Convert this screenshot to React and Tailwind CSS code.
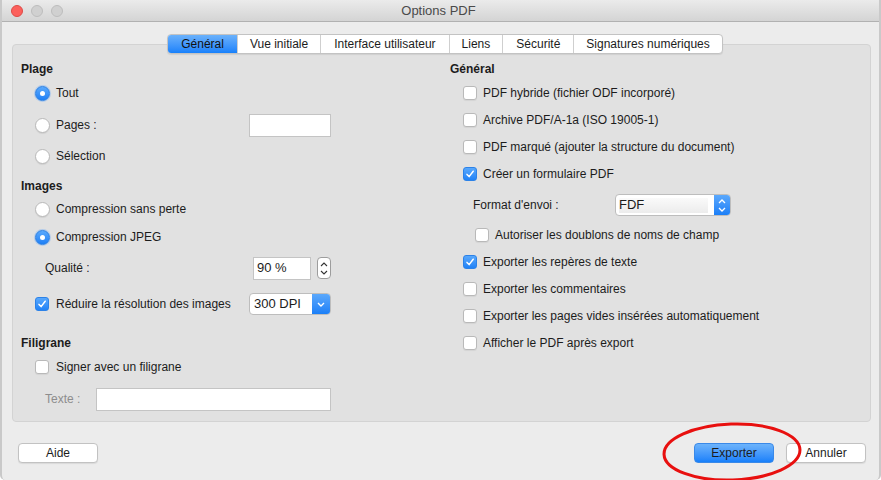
import React from 'react'

const font = { fontFamily: '"Liberation Sans", Arial, Helvetica, sans-serif' }

function Radio({ checked }) {
  if (checked) {
    return (
      <div className="w-[15px] h-[15px] rounded-full bg-gradient-to-b from-[#5aa9fc] to-[#1b7ff6] border border-[#2a80e6] flex items-center justify-center shrink-0 shadow-[0_0_0_1px_rgba(90,160,250,0.35)]">
        <div className="w-[5px] h-[5px] rounded-full bg-white"></div>
      </div>
    )
  }
  return (
    <div className="w-[15px] h-[15px] rounded-full bg-white border border-[#b9b9b9] shrink-0 shadow-[0_1px_1px_rgba(0,0,0,0.08)]"></div>
  )
}

function Check({ checked }) {
  if (checked) {
    return (
      <div className="w-[14px] h-[14px] rounded-[3px] bg-gradient-to-b from-[#58a8fc] to-[#1f82f7] border border-[#2c82e8] flex items-center justify-center shrink-0">
        <svg width="10" height="10" viewBox="0 0 10 10">
          <path d="M2 5.4 L4.1 7.6 L8.2 2.2" fill="none" stroke="white" strokeWidth="1.5" strokeLinecap="round" strokeLinejoin="round" />
        </svg>
      </div>
    )
  }
  return <div className="w-[14px] h-[14px] rounded-[3px] bg-white border border-[#b9b9b9] shrink-0 shadow-[0_1px_1px_rgba(0,0,0,0.06)]"></div>
}

function RadioRow({ checked, label, className = '', children }) {
  return (
    <div className={`h-[24px] flex items-center ${className}`}>
      <div className="ml-[14px] flex items-center gap-[6px]">
        <Radio checked={checked} />
        <span>{label}</span>
      </div>
      {children}
    </div>
  )
}

function CheckRow({ checked, label, indent = 'ml-[13px]', className = '' }) {
  return (
    <div className={`h-[24px] flex items-center ${className}`}>
      <div className={`${indent} flex items-center gap-[6px]`}>
        <Check checked={checked} />
        <span className="whitespace-nowrap">{label}</span>
      </div>
    </div>
  )
}

function Input({ className = '', value = '' }) {
  return (
    <div className={`h-[23px] bg-white border border-[#c4c4c4] flex items-center px-[3px] text-[13px] ${className}`}>
      {value}
    </div>
  )
}

export default function App() {
  const tabs = [
    ['Général', 'px-[13px]'],
    ['Vue initiale', 'px-[12px]'],
    ['Interface utilisateur', 'px-[13px]'],
    ['Liens', 'px-[12px]'],
    ['Sécurité', 'px-[13px]'],
    ['Signatures numériques', 'px-[12px]'],
  ]

  return (
    <div className="w-[881px] h-[480px] bg-[#ececec] text-[12px] text-[#1c1c1c] relative overflow-hidden border-l-2 border-r-2 border-[#c9c9c9] rounded-b-[5px]" style={font}>
      {/* title bar */}
      <div className="h-[22px] bg-gradient-to-b from-[#ebebeb] to-[#d4d4d4] border-b border-[#b1b1b1] flex items-center relative">
        <div className="flex items-center gap-[8px] ml-[9px]">
          <div className="w-[12px] h-[12px] rounded-full bg-[#fc605c] border border-[#de4a46]"></div>
          <div className="w-[12px] h-[12px] rounded-full bg-[#d0d0d0] border border-[#bdbdbd]"></div>
          <div className="w-[12px] h-[12px] rounded-full bg-[#d0d0d0] border border-[#bdbdbd]"></div>
        </div>
        <div className="flex-1 text-center text-[13px] text-[#4a4a4a] mr-[65px]">Options PDF</div>
      </div>

      {/* tabs */}
      <div className="mt-[12px] flex justify-center relative z-10 pl-[9px]">
        <div className="flex h-[20px] rounded-[4px] border border-[#c3c3c3] bg-white overflow-hidden shadow-[0_1px_1px_rgba(0,0,0,0.08)]">
          {tabs.map(([t, pad], i) => (
            <div
              key={t}
              className={`${pad} flex items-center ${i > 0 ? 'border-l border-[#cfcfcf]' : ''} ${
                i === 0 ? 'bg-gradient-to-b from-[#6ab1fb] to-[#1681fb] text-[#111]' : ''
              }`}
            >
              {t}
            </div>
          ))}
        </div>
      </div>

      {/* panel */}
      <div className="-mt-[10px] ml-[10px] w-[859px] h-[378px] bg-[#e1e1e1] border border-[#d3d3d3] rounded-[4px] grid grid-cols-[428px_1fr] pt-[14px]">
        {/* left column */}
        <div className="pl-[8px] w-[318px]">
          <div className="h-[20px] flex items-center font-bold">Plage</div>
          <RadioRow checked label="Tout" className="mt-[2px]" />
          <RadioRow label="Pages :" className="mt-[8px] justify-between">
            <Input className="w-[82px]" />
          </RadioRow>
          <RadioRow label="Sélection" className="mt-[7px]" />

          <div className="h-[20px] mt-[8px] flex items-center font-bold">Images</div>
          <RadioRow label="Compression sans perte" className="mt-[1px]" />
          <RadioRow checked label="Compression JPEG" className="mt-[4px]" />
          <div className="h-[24px] mt-[7px] flex items-center">
            <span className="ml-[24px] flex-1">Qualité :</span>
            <Input className="w-[58px]" value="90 %" />
            <div className="ml-[6px] w-[14px] h-[22px] bg-white border border-[#9d9d9d] rounded-[4px] flex flex-col items-center justify-center gap-[3px]">
              <svg width="8" height="5" viewBox="0 0 8 5"><path d="M1 4 L4 1 L7 4" fill="none" stroke="#333" strokeWidth="1.1" /></svg>
              <svg width="8" height="5" viewBox="0 0 8 5"><path d="M1 1 L4 4 L7 1" fill="none" stroke="#333" strokeWidth="1.1" /></svg>
            </div>
          </div>
          <div className="h-[24px] mt-[12px] flex items-center">
            <div className="ml-[14px] flex items-center gap-[7px] flex-1">
              <Check checked />
              <span>Réduire la résolution des images</span>
            </div>
            <div className="w-[82px] h-[22px] flex rounded-[4px] overflow-hidden border border-[#bdbdbd] bg-white">
              <div className="flex-1 flex items-center pl-[4px] text-[13px]">300 DPI</div>
              <div className="w-[18px] bg-gradient-to-b from-[#5aa8fc] to-[#1a7ff7] flex items-center justify-center">
                <svg width="8" height="5" viewBox="0 0 8 5"><path d="M1 1 L4 4 L7 1" fill="none" stroke="white" strokeWidth="1.4" /></svg>
              </div>
            </div>
          </div>

          <div className="h-[20px] mt-[17px] flex items-center font-bold">Filigrane</div>
          <div className="h-[24px] mt-[2px] flex items-center">
            <div className="ml-[14px] flex items-center gap-[7px]">
              <Check />
              <span>Signer avec un filigrane</span>
            </div>
          </div>
          <div className="h-[24px] mt-[8px] flex items-center">
            <span className="ml-[24px] flex-1 text-[#8d8d8d]">Texte :</span>
            <Input className="w-[235px]" />
          </div>
        </div>

        {/* right column */}
        <div className="pl-[9px]">
          <div className="h-[20px] flex items-center font-bold">Général</div>
          <CheckRow label="PDF hybride (fichier ODF incorporé)" className="mt-[2px]" />
          <CheckRow label="Archive PDF/A-1a (ISO 19005-1)" className="mt-[3px]" />
          <CheckRow label="PDF marqué (ajouter la structure du document)" className="mt-[3px]" />
          <CheckRow checked label="Créer un formulaire PDF" className="mt-[3px]" />
          <div className="h-[24px] mt-[7px] flex items-center">
            <span className="ml-[23px] w-[142px]">Format d'envoi :</span>
            <div className="w-[116px] h-[22px] flex rounded-[4px] overflow-hidden border border-[#bdbdbd] bg-white">
              <div className="flex-1 flex items-center pl-[3px] pr-[6px] text-[13px]">
                <div className="w-full h-[15px] bg-gradient-to-b from-[#fafafa] to-[#ececec] flex items-center">FDF</div>
              </div>
              <div className="w-[16px] bg-gradient-to-b from-[#5aa8fc] to-[#1a7ff7] flex flex-col items-center justify-center gap-[3px]">
                <svg width="8" height="5" viewBox="0 0 8 5"><path d="M1 4 L4 1 L7 4" fill="none" stroke="white" strokeWidth="1.3" /></svg>
                <svg width="8" height="5" viewBox="0 0 8 5"><path d="M1 1 L4 4 L7 1" fill="none" stroke="white" strokeWidth="1.3" /></svg>
              </div>
            </div>
          </div>
          <CheckRow label="Autoriser les doublons de noms de champ" indent="ml-[25px]" className="mt-[6px]" />
          <CheckRow checked label="Exporter les repères de texte" className="mt-[3px]" />
          <CheckRow label="Exporter les commentaires" className="mt-[3px]" />
          <CheckRow label="Exporter les pages vides insérées automatiquement" className="mt-[3px]" />
          <CheckRow label="Afficher le PDF après export" className="mt-[3px]" />
        </div>
      </div>

      {/* bottom buttons */}
      <div className="mt-[21px] flex items-center pl-[16px] pr-[13px]">
        <div className="w-[80px] h-[20px] bg-white border border-[#c2c2c2] rounded-[4px] flex items-center justify-center shadow-[0_1px_1px_rgba(0,0,0,0.08)]">Aide</div>
        <div className="flex-1"></div>
        <div className="w-[80px] h-[20px] bg-gradient-to-b from-[#6cb3fb] to-[#1680fa] border border-[#3a89e8] rounded-[4px] flex items-center justify-center">Exporter</div>
        <div className="ml-[12px] w-[80px] h-[20px] bg-white border border-[#c2c2c2] rounded-[4px] flex items-center justify-center shadow-[0_1px_1px_rgba(0,0,0,0.08)]">Annuler</div>
      </div>

      {/* red annotation ellipse */}
      <svg className="absolute left-[655px] top-[420px]" width="160" height="64" viewBox="0 0 160 64">
        <ellipse cx="75" cy="32" rx="68" ry="28" fill="none" stroke="#e8100f" strokeWidth="3" transform="rotate(-2 75 32)" />
      </svg>
    </div>
  )
}
